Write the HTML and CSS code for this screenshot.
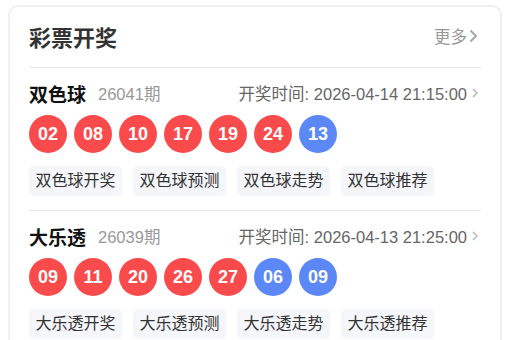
FILE: index.html
```html
<!DOCTYPE html>
<html>
<head>
<meta charset="utf-8">
<meta name="viewport" content="width=device-width, initial-scale=1.0">
<link rel="stylesheet" href="styles.css">
</head>
<body>
<div class="card">
	<div class="card-head">
		<h2 class="card-title">彩票开奖</h2>
		<a class="more" href="#">更多<svg width="11" height="14" viewBox="0 0 11 14"><path d="M2.5 1.5 L8 7 L2.5 12.5" fill="none" stroke="#a6a6a6" stroke-width="2"/></svg></a>
	</div>

	<div class="lottery">
		<div class="lot-head">
			<span class="lot-name">双色球</span>
			<span class="lot-issue">26041期</span>
			<a class="lot-time" href="#">开奖时间: 2026-04-14 21:15:00<svg width="10" height="12" viewBox="0 0 10 12"><path d="M3 2 L7 6 L3 10" fill="none" stroke="#b5b5b5" stroke-width="1.4"/></svg></a>
		</div>
		<div class="balls">
			<span class="ball red">02</span>
			<span class="ball red">08</span>
			<span class="ball red">10</span>
			<span class="ball red">17</span>
			<span class="ball red">19</span>
			<span class="ball red">24</span>
			<span class="ball blue">13</span>
		</div>
		<div class="tags">
			<a class="tag" href="#">双色球开奖</a>
			<a class="tag" href="#">双色球预测</a>
			<a class="tag" href="#">双色球走势</a>
			<a class="tag" href="#">双色球推荐</a>
		</div>
	</div>

	<div class="lottery">
		<div class="lot-head">
			<span class="lot-name">大乐透</span>
			<span class="lot-issue">26039期</span>
			<a class="lot-time" href="#">开奖时间: 2026-04-13 21:25:00<svg width="10" height="12" viewBox="0 0 10 12"><path d="M3 2 L7 6 L3 10" fill="none" stroke="#b5b5b5" stroke-width="1.4"/></svg></a>
		</div>
		<div class="balls">
			<span class="ball red">09</span>
			<span class="ball red">11</span>
			<span class="ball red">20</span>
			<span class="ball red">26</span>
			<span class="ball red">27</span>
			<span class="ball blue">06</span>
			<span class="ball blue">09</span>
		</div>
		<div class="tags">
			<a class="tag" href="#">大乐透开奖</a>
			<a class="tag" href="#">大乐透预测</a>
			<a class="tag" href="#">大乐透走势</a>
			<a class="tag" href="#">大乐透推荐</a>
		</div>
	</div>
</div>
</body>
</html>
```

FILE: styles.css
```css
body {
	margin: 5px 7px 0 8px;
	background: #fff;
	font-family: "Liberation Sans", Arial, "Noto Sans CJK SC", sans-serif;
	color: #333;
}
a {text-decoration: none; color: inherit;}

.card {
	border: 2px solid #efefef;
	border-radius: 10px;
	padding: 14px 19px 0 19px;
	background: #fff;
}

.card-head {
	display: flex;
	align-items: center;
	justify-content: space-between;
	height: 30px;
	padding-bottom: 16px;
}
.card-title {
	margin: 0;
	font-size: 22px;
	font-weight: bold;
	color: #333;
}
.more {
	display: flex;
	align-items: center;
	font-size: 16.5px;
	color: #999;
	margin-right: 2px;
}
.more svg {margin-left: 1px;}

.lottery {
	border-top: 1px solid #e8e8e8;
	padding: 13px 0 14px 0;
}

.lot-head {
	display: flex;
	align-items: center;
	height: 24px;
}
.lot-name {
	font-size: 19px;
	font-weight: bold;
	color: #111;
}
.lot-issue {
	font-size: 16.5px;
	color: #999;
	margin-left: 12px;
}
.lot-time {
	margin-left: auto;
	display: flex;
	align-items: center;
	font-size: 16.5px;
	color: #666;
}
.lot-time svg {margin-left: 3px; margin-right: 1px;}

.balls {
	display: flex;
	gap: 7px;
	margin-top: 10px;
}
.ball {
	width: 38px;
	height: 38px;
	border-radius: 50%;
	display: flex;
	align-items: center;
	justify-content: center;
	color: #fff;
	font-size: 18px;
	font-weight: bold;
}
.red {background: #f94b4b;}
.blue {background: #5c87f6;}

.tags {
	display: flex;
	gap: 11px;
	margin-top: 13px;
}
.tag {
	height: 30px;
	line-height: 30px;
	padding: 0 6.5px;
	background: #f5f6fa;
	border-radius: 5px;
	font-size: 16px;
	color: #333;
}
```
